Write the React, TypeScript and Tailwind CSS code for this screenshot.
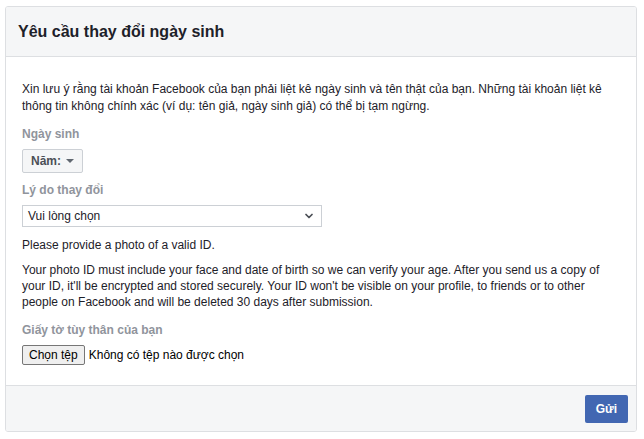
import { ChevronDown } from "lucide-react";

export default function App() {
  return (
    <div className="min-h-[439px] w-[644px] bg-white pt-[6px] pl-[5px] font-['Liberation_Sans',Arial,sans-serif] text-[12px] text-[#1d2129]">
      <div className="w-[632px] overflow-hidden rounded-[3px] border border-[#dddfe2] bg-white">
        {/* header */}
        <div className="flex h-[50px] items-center border-b border-[#dddfe2] bg-[#f5f6f7] px-[12px]">
          <h2 className="text-[16px] font-bold text-[#1d2129]">Yêu cầu thay đổi ngày sinh</h2>
        </div>

        {/* body */}
        <div className="px-[16px] pt-[24px] pb-[20px]">
          <p className="leading-[17px]">
            Xin lưu ý rằng tài khoản Facebook của bạn phải liệt kê ngày sinh và tên thật của bạn. Những tài khoản liệt kê thông tin không chính xác (ví dụ: tên giả, ngày sinh giả) có thể bị tạm ngừng.
          </p>

          <div className="mt-[11px] text-[12px] font-bold leading-[16px] text-[#90949c]">Ngày sinh</div>
          <button className="mt-[7px] flex h-[24px] items-center gap-[5px] rounded-[2px] border border-[#ccd0d5] bg-[#f5f6f7] px-[8px] text-[12px] font-bold text-[#4b4f56]">
            Năm:
            <span className="h-0 w-0 border-x-[4px] border-t-[4px] border-x-transparent border-t-[#606770]" />
          </button>

          <div className="mt-[9px] text-[12px] font-bold leading-[16px] text-[#90949c]">Lý do thay đổi</div>
          <div className="mt-[7px] flex h-[22px] w-[300px] items-center justify-between border border-[#ccd0d5] bg-white pl-[5px] pr-[6px]">
            <span>Vui lòng chọn</span>
            <ChevronDown size={12} strokeWidth={3.5} className="text-[#4b4f56]" />
          </div>

          <p className="mt-[10px] leading-[16px]">Please provide a photo of a valid ID.</p>
          <p className="mt-[9px] leading-[16px]">
            Your photo ID must include your face and date of birth so we can verify your age. After you send us a copy of your ID, it'll be encrypted and stored securely. Your ID won't be visible on your profile, to friends or to other people on Facebook and will be deleted 30 days after submission.
          </p>

          <div className="mt-[12px] text-[12px] font-bold leading-[16px] text-[#90949c]">Giấy tờ tùy thân của bạn</div>
          <div className="mt-[7px] flex items-center gap-[4px]">
            <button className="h-[20px] rounded-[2px] border border-[#767676] bg-[#efefef] px-[6px] text-[12px] leading-[18px] text-black">
              Chọn tệp
            </button>
            <span className="text-[12px] text-black">Không có tệp nào được chọn</span>
          </div>
        </div>

        {/* footer */}
        <div className="flex h-[46px] items-center justify-end border-t border-[#dddfe2] bg-[#f5f6f7] px-[8px]">
          <button className="h-[28px] rounded-[2px] bg-[#4267b2] px-[11px] text-[12px] font-bold text-white">Gửi</button>
        </div>
      </div>
    </div>
  );
}
